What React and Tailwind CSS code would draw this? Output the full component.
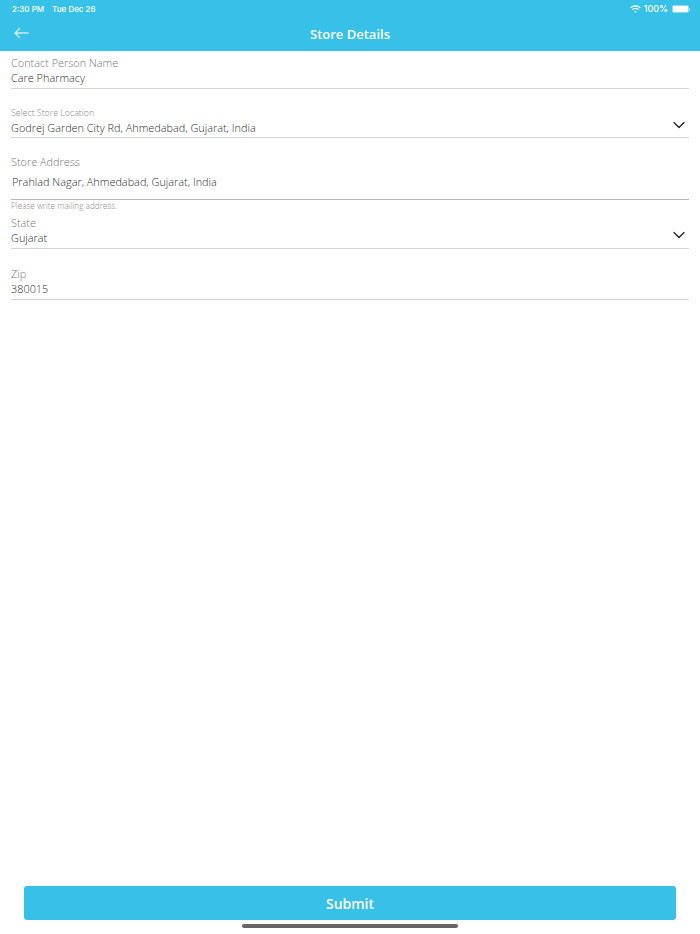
import React from "react";
import { ChevronDown } from "lucide-react";

function Field({ label, value, select, className }) {
  return (
    <div className={`relative mx-[11px] border-b border-[#d4d4d4] ${className}`}>
      <div className="text-[10.9px] leading-[15px] font-light text-[#777777]">{label}</div>
      <div className="text-[10.9px] leading-[15px] font-light text-[#2f2f2f]">{value}</div>
      {select ? (
        <ChevronDown className="absolute right-0 bottom-[3px] h-[20px] w-[20px] text-[#222222]" strokeWidth={1.5} />
      ) : null}
    </div>
  );
}

export default function App() {
  return (
    <div className="flex h-[934px] w-[700px] flex-col bg-white font-['Open_Sans',sans-serif]">
      <div className="h-[51px] shrink-0 bg-[#38c1e8] text-white">
        <div className="flex h-[17px] items-center justify-between pl-[12px] pr-[10px] pt-[1px] font-['Inter',sans-serif] text-[9px] font-medium">
          <div className="flex gap-[8px] text-[8px]">
            <span>2:30 PM</span>
            <span>Tue Dec 26</span>
          </div>
          <div className="flex items-center gap-[3px]">
            <svg width="11" height="8" viewBox="0 0 11 8" fill="none" stroke="white" strokeWidth="1.2">
              <path d="M0.7 2.8a6.8 6.8 0 0 1 9.6 0" />
              <path d="M2.4 4.6a4.3 4.3 0 0 1 6.2 0" />
              <circle cx="5.5" cy="6.6" r="0.9" fill="white" stroke="none" />
            </svg>
            <span>100%</span>
            <div className="ml-[1px] flex items-center">
              <div className="h-[8px] w-[17px] rounded-[2px] bg-white/40 p-[1px]">
                <div className="h-full w-full rounded-[1px] bg-white" />
              </div>
              <div className="h-[3px] w-[1px] bg-white/50" />
            </div>
          </div>
        </div>
        <div className="relative flex h-[34px] items-center justify-center">
          <svg className="absolute left-[14px] top-[10px]" width="15" height="12" viewBox="0 0 15 12" fill="none" stroke="white" strokeWidth="1.1">
            <path d="M14.5 6H1" />
            <path d="M6 1L1 6l5 5" />
          </svg>
          <span className="pt-[1px] text-[13px] font-semibold">Store Details</span>
        </div>
      </div>

      <Field label="Contact Person Name" value="Care Pharmacy" className="pt-[4px] pb-[3px]" />

      <div className="relative mx-[11px] mt-[17px] border-b border-[#d4d4d4] pb-[1px]">
        <div className="text-[8.8px] leading-[14px] font-light text-[#8a8a8a]">Select Store Location</div>
        <div className="text-[10.9px] leading-[16px] font-light text-[#2f2f2f]">Godrej Garden City Rd, Ahmedabad, Gujarat, India</div>
        <ChevronDown className="absolute right-0 bottom-[2px] h-[20px] w-[20px] text-[#222222]" strokeWidth={1.5} />
      </div>

      <div className="mx-[11px] mt-[16px] border-b border-[#b8b8b8] pb-[8px]">
        <div className="text-[10.9px] leading-[15px] font-light text-[#777777]">Store Address</div>
        <div className="mt-[4px] pl-[1px] text-[10.9px] leading-[18px] font-light text-[#2f2f2f]">Prahlad Nagar, Ahmedabad, Gujarat, India</div>
      </div>
      <div className="mx-[11px] text-[8.2px] leading-[11px] font-light text-[#8a8a8a]">Please write mailing address.</div>

      <Field label="State" value="Gujarat" select className="pt-[4px] pb-[3px]" />
      <Field label="Zip" value="380015" className="mt-[17px] pb-[3px]" />

      <div className="mt-auto flex flex-col items-center">
        <button className="h-[34px] w-[652px] rounded-[3px] bg-[#38c1e8] text-[14px] font-semibold text-white">
          Submit
        </button>
        <div className="mt-[4px] mb-[6px] h-[4px] w-[216px] rounded-full bg-[#666666]" />
      </div>
    </div>
  );
}
